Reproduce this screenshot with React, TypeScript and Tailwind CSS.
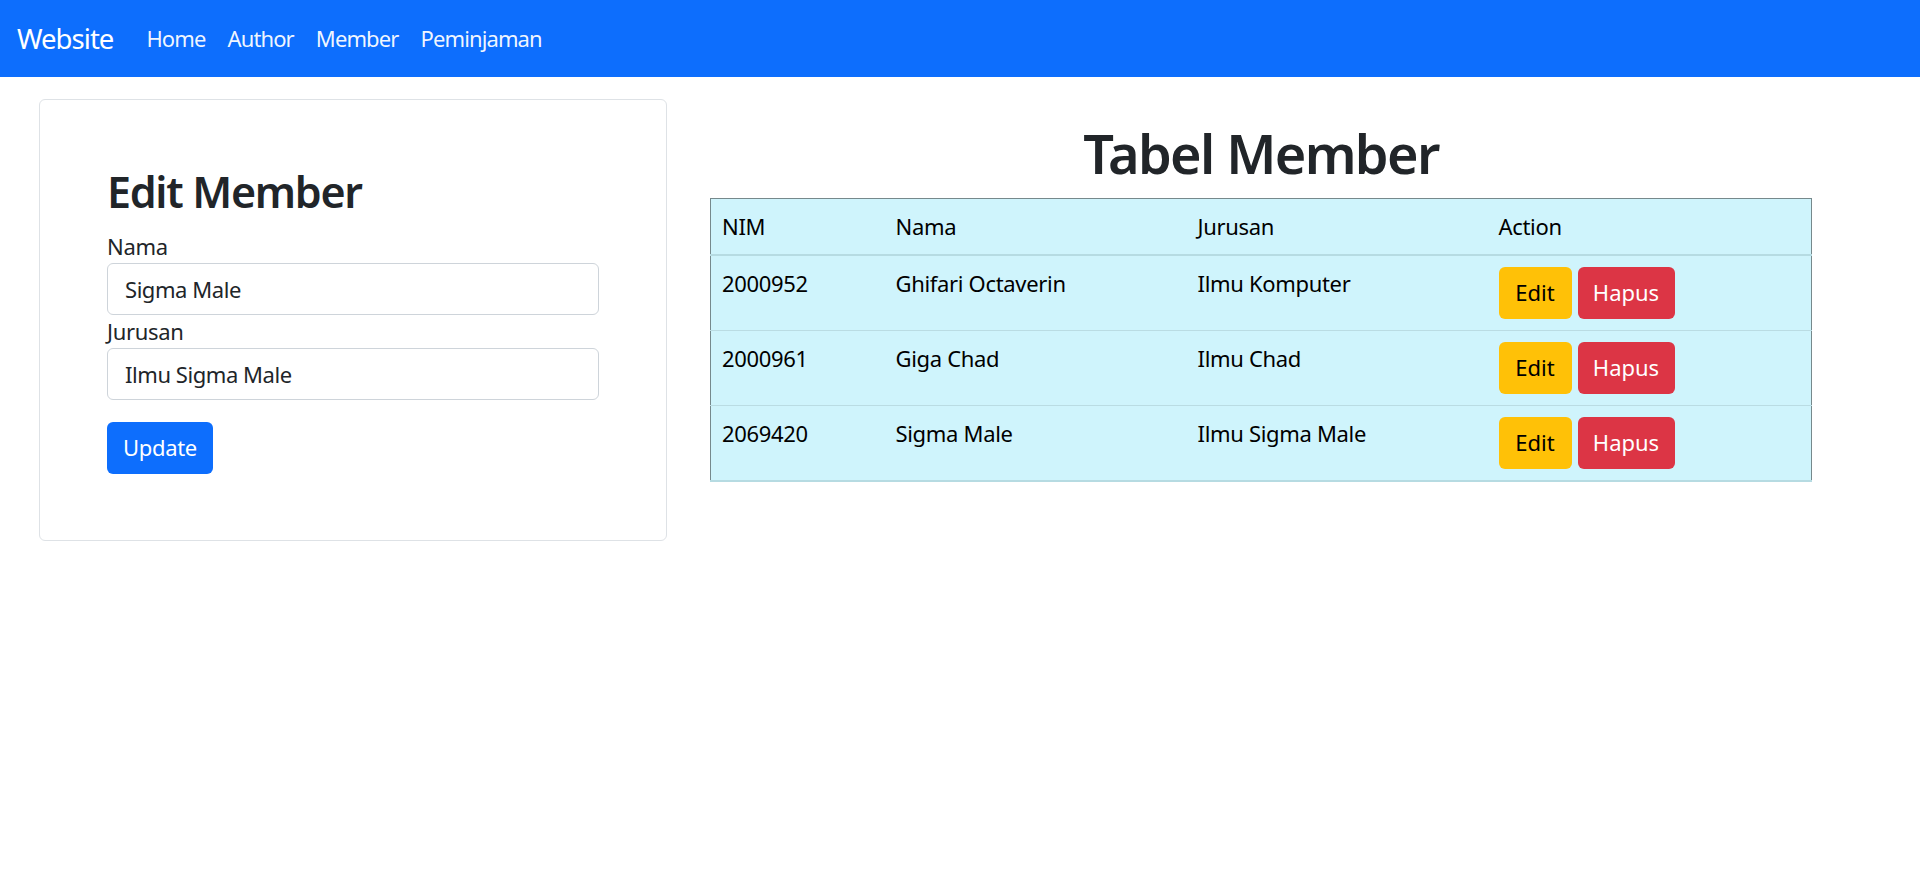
import React from "react";

const members = [
  { nim: "2000952", nama: "Ghifari Octaverin", jurusan: "Ilmu Komputer" },
  { nim: "2000961", nama: "Giga Chad", jurusan: "Ilmu Chad" },
  { nim: "2069420", nama: "Sigma Male", jurusan: "Ilmu Sigma Male" },
];

const navLinks = ["Home", "Author", "Member", "Peminjaman"];

function Navbar() {
  return (
    <nav className="h-[77px] bg-[#0d6efd] flex items-center pl-[17px]">
      <span className="text-[27.5px] text-white mr-[22px] leading-none tracking-[-0.035em]">
        Website
      </span>
      <ul className="flex">
        {navLinks.map((link) => (
          <li key={link} className="px-[11px] text-[22px] text-white/95 tracking-[-0.04em]">
            {link}
          </li>
        ))}
      </ul>
    </nav>
  );
}

function EditCard() {
  return (
    <div className="w-[628px] mt-[22px] border border-[#dee2e6] rounded-[6px] px-[67px] pt-[66px] pb-[66px]">
      <h2 className="text-[43px] font-semibold leading-[1.23] text-[#212529] mb-[11px] tracking-[-0.03em]">
        Edit Member
      </h2>
      <form className="flex flex-col">
        <label className="text-[22px] leading-[33px] text-[#212529]">Nama</label>
        <input
          defaultValue="Sigma Male"
          className="h-[52px] border border-[#ced4da] rounded-[6px] px-[17px] text-[22px] text-[#212529] outline-none tracking-[-0.02em]"
        />
        <label className="text-[22px] leading-[33px] text-[#212529]">Jurusan</label>
        <input
          defaultValue="Ilmu Sigma Male"
          className="h-[52px] border border-[#ced4da] rounded-[6px] px-[17px] text-[22px] text-[#212529] outline-none tracking-[-0.02em]"
        />
        <div className="mt-[22px]">
          <button
            type="button"
            className="h-[52px] px-[16px] bg-[#0d6efd] text-white text-[22px] rounded-[6px]"
          >
            Update
          </button>
        </div>
      </form>
    </div>
  );
}

function MemberTable() {
  return (
    <div className="w-[1102px] mt-[44px]">
      <h1 className="text-center text-[54px] font-semibold leading-[1.22] text-[#212529] mb-[11px] tracking-[-0.03em]">
        Tabel Member
      </h1>
      <table className="w-full border-collapse bg-[#cff4fc] text-[22px] text-black border-t border-x border-t-[#76898c] border-x-[#76898c] border-b-2 border-b-[#b6dbe2]">
        <thead>
          <tr className="border-b-2 border-[#b6dbe2]">
            <th className="w-[174px] text-left font-normal px-[11px] py-[11px] leading-[33px]">NIM</th>
            <th className="w-[302px] text-left font-normal px-[11px] py-[11px] leading-[33px]">Nama</th>
            <th className="w-[301px] text-left font-normal px-[11px] py-[11px] leading-[33px]">Jurusan</th>
            <th className="text-left font-normal px-[11px] py-[11px] leading-[33px]">Action</th>
          </tr>
        </thead>
        <tbody>
          {members.map((m, i) => (
            <tr
              key={m.nim}
              className={i < members.length - 1 ? "border-b border-[#badce3]" : ""}
            >
              <td className="align-top px-[11px] py-[11px] leading-[33px]">{m.nim}</td>
              <td className="align-top px-[11px] py-[11px] leading-[33px]">{m.nama}</td>
              <td className="align-top px-[11px] py-[11px] leading-[33px]">{m.jurusan}</td>
              <td className="align-top px-[11px] py-[11px]">
                <div className="flex gap-[6px] tracking-normal">
                  <button
                    type="button"
                    className="h-[52px] w-[73px] bg-[#ffc107] text-black rounded-[6px]"
                  >
                    Edit
                  </button>
                  <button
                    type="button"
                    className="h-[52px] w-[97px] bg-[#dc3545] text-white rounded-[6px]"
                  >
                    Hapus
                  </button>
                </div>
              </td>
            </tr>
          ))}
        </tbody>
      </table>
    </div>
  );
}

export default function App() {
  return (
    <div className="min-h-screen bg-white font-['Noto_Sans',sans-serif] tracking-[-0.02em]">
      <Navbar />
      <main className="flex pl-[39px] gap-[43px]">
        <EditCard />
        <MemberTable />
      </main>
    </div>
  );
}
